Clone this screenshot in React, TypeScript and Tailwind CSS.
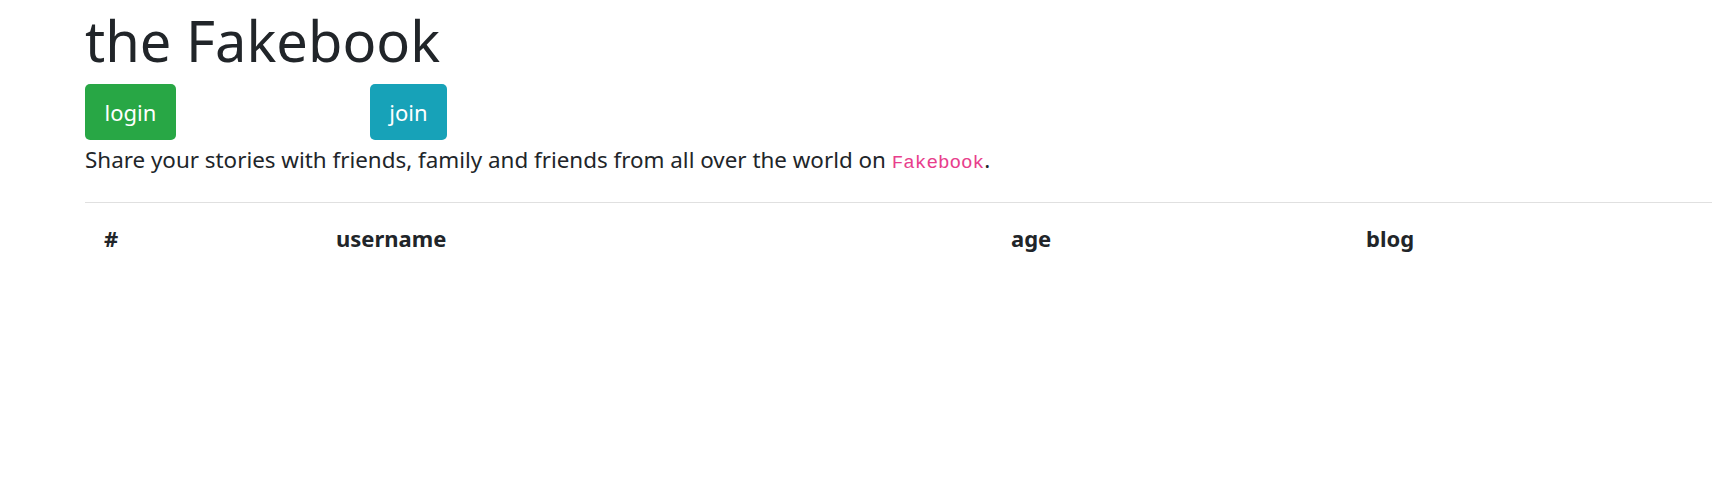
const App = () => {
  return (
    <div className="min-h-screen bg-white pl-[85px] text-[#212529] font-['Noto_Sans',sans-serif]">
      <h1 className="pt-[7px] text-[56px] font-normal leading-[1.2]">the Fakebook</h1>
      <div className="mt-[10px] flex items-start">
        <button className="h-[56px] w-[91px] rounded-[5px] bg-[#28a745] text-[22px] text-white">login</button>
        <button className="ml-[194px] h-[56px] w-[77px] rounded-[5px] bg-[#17a2b8] text-[22px] text-white">join</button>
      </div>
      <p className="mt-[3px] text-[22.4px] leading-[33px]">
        Share your stories with friends, family and friends from all over the world on{" "}
        <code className="font-['Liberation_Mono',monospace] text-[19.25px] text-[#e83e8c]">Fakebook</code>.
      </p>
      <hr className="mt-[22px] border-[#e0e0e0]" />
      <div className="ml-[6px] mt-[6px] grid grid-cols-[232px_675px_355px_1fr] text-[22px] font-bold leading-[33px]">
        <div className="p-[13px]">#</div>
        <div className="p-[13px]">username</div>
        <div className="p-[13px]">age</div>
        <div className="p-[13px]">blog</div>
      </div>
    </div>
  );
};

export default App;
